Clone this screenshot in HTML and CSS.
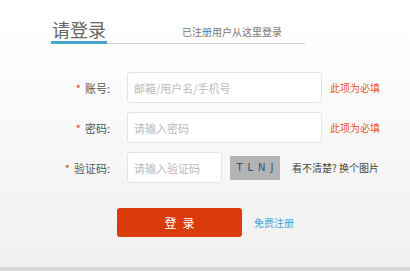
FILE: index.html
```html
<!DOCTYPE html>
<html lang="zh-CN">
<head>
    <meta charset="UTF-8">
    <meta name="viewport" content="width=device-width, initial-scale=1.0">
    <title>请登录</title>
    <link rel="stylesheet" href="styles.css">
</head>
<body>
    <div class="login-page">
        <!-- Header -->
        <div class="login-header">
            <h2 class="login-title">请登录</h2>
            <span class="login-sub">已注册用户从这里登录</span>
        </div>

        <!-- Form -->
        <div class="login-form">
            <div class="form-row">
                <label class="form-label"><span class="star">*</span>账号:</label>
                <input type="text" class="form-input" placeholder="邮箱/用户名/手机号">
                <span class="form-error">此项为必填</span>
            </div>
            <div class="form-row">
                <label class="form-label"><span class="star">*</span>密码:</label>
                <input type="password" class="form-input" placeholder="请输入密码">
                <span class="form-error">此项为必填</span>
            </div>
            <div class="form-row">
                <label class="form-label"><span class="star">*</span>验证码:</label>
                <input type="text" class="form-input code-input" placeholder="请输入验证码">
                <span class="captcha">TLNJ</span>
                <a class="captcha-refresh">看不清楚? 换个图片</a>
            </div>
            <div class="submit-row">
                <button class="submit-btn">登录</button>
                <a class="register-link">免费注册</a>
            </div>
        </div>
    </div>
    <div class="page-bottom"></div>
</body>
</html>
```

FILE: styles.css
```css
/* General Styling */
body, html {
    margin: 0;
    padding: 0;
    height: 100%;
    font-family: "Noto Sans CJK SC", "Noto Sans", sans-serif;
}

body {
    display: flex;
    flex-direction: column;
    overflow: hidden;
}

.login-page {
    flex: 1;
    background: linear-gradient(#ffffff 10%, #f0f0f0 100%);
}

/* Header */
.login-header {
    display: flex;
    align-items: flex-end;
    width: 254px;
    margin-left: 51px;
    padding-top: 17px;
    border-bottom: 1px solid #cfcfcf;
}

.login-title {
    margin: 0 0 -1px 0;
    padding: 0 1px;
    font-size: 18px;
    font-weight: normal;
    line-height: 24px;
    color: #666;
    border-bottom: 3px solid #4ba4c9;
}

.login-sub {
    margin-left: 75px;
    padding-bottom: 4px;
    font-size: 10px;
    line-height: 14px;
    color: #777;
}

/* Form */
.login-form {
    margin-top: 28px;
}

.form-row {
    display: flex;
    align-items: center;
    height: 31px;
    margin-bottom: 9px;
}

.form-label {
    width: 110px;
    margin-right: 17px;
    text-align: right;
    font-size: 11px;
    color: #555;
}

.star {
    color: #e4392b;
    margin-right: 4px;
}

.form-input {
    box-sizing: border-box;
    width: 195px;
    height: 31px;
    padding: 0 6px;
    border: 1px solid #e3e3e3;
    border-radius: 3px;
    background: #fff;
    font-family: inherit;
    font-size: 11px;
    outline: none;
}

.form-input::placeholder {
    color: #bbb;
}

.code-input {
    width: 95px;
}

.form-error {
    margin-left: 8px;
    font-size: 10px;
    color: #e8542c;
}

.captcha {
    display: flex;
    align-items: center;
    justify-content: center;
    width: 50px;
    height: 24px;
    margin-left: 8px;
    background: #b4b4b4;
    font-family: "DejaVu Sans", sans-serif;
    font-size: 10px;
    letter-spacing: 5px;
    text-indent: 5px;
    color: #34506e;
}

.captcha-refresh {
    margin-left: 12px;
    font-size: 10px;
    color: #444;
}

/* Submit */
.submit-row {
    display: flex;
    align-items: center;
    margin-top: 25px;
    margin-left: 117px;
}

.submit-btn {
    width: 125px;
    height: 29px;
    border: none;
    border-radius: 3px;
    background: #da3b0a;
    color: #fff;
    font-family: inherit;
    font-size: 12px;
    letter-spacing: 6px;
    text-indent: 6px;
    cursor: pointer;
}

.register-link {
    margin-left: 12px;
    font-size: 10px;
    color: #4c9fd6;
}

.page-bottom {
    height: 4px;
    background: #d8d8d8;
}
```
